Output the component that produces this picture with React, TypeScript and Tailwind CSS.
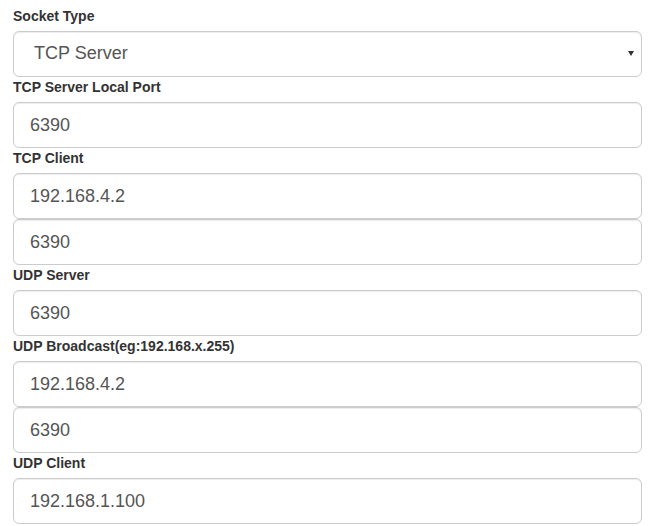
import React from "react";

const inputCls =
  "block w-full h-[46px] rounded-[6px] border border-[#ccc] bg-white px-4 text-[18px] leading-[1.3333] text-[#555] shadow-[inset_0_1px_1px_rgba(0,0,0,0.075)] outline-none";

function Label({ children }: { children: React.ReactNode }) {
  return (
    <label className="block mb-[5px] text-[14px] leading-[20px] font-bold text-[#333]">
      {children}
    </label>
  );
}

function Field({ value }: { value: string }) {
  return <input className={inputCls} defaultValue={value} readOnly />;
}

export default function App() {
  return (
    <div
      className="w-[648px] h-[526px] overflow-hidden bg-white pt-[6px] pl-[13px] pr-[6px]"
      style={{ fontFamily: '"Liberation Sans", Arial, sans-serif' }}
    >
      <Label>Socket Type</Label>
      <div className="relative">
        <select
          className={inputCls + " appearance-none pl-[20px]"}
          defaultValue="tcps"
        >
          <option value="tcps">TCP Server</option>
          <option value="tcpc">TCP Client</option>
          <option value="udps">UDP Server</option>
          <option value="udpb">UDP Broadcast</option>
          <option value="udpc">UDP Client</option>
        </select>
        {/* dropdown arrow */}
        <span className="pointer-events-none absolute right-[8px] top-[20px] h-0 w-0 border-x-[3px] border-t-[5px] border-x-transparent border-t-[#333]" />
      </div>

      <Label>TCP Server Local Port</Label>
      <Field value="6390" />

      <Label>TCP Client</Label>
      <Field value="192.168.4.2" />
      <Field value="6390" />

      <Label>UDP Server</Label>
      <Field value="6390" />

      <Label>UDP Broadcast(eg:192.168.x.255)</Label>
      <Field value="192.168.4.2" />
      <Field value="6390" />

      <Label>UDP Client</Label>
      <Field value="192.168.1.100" />
    </div>
  );
}
